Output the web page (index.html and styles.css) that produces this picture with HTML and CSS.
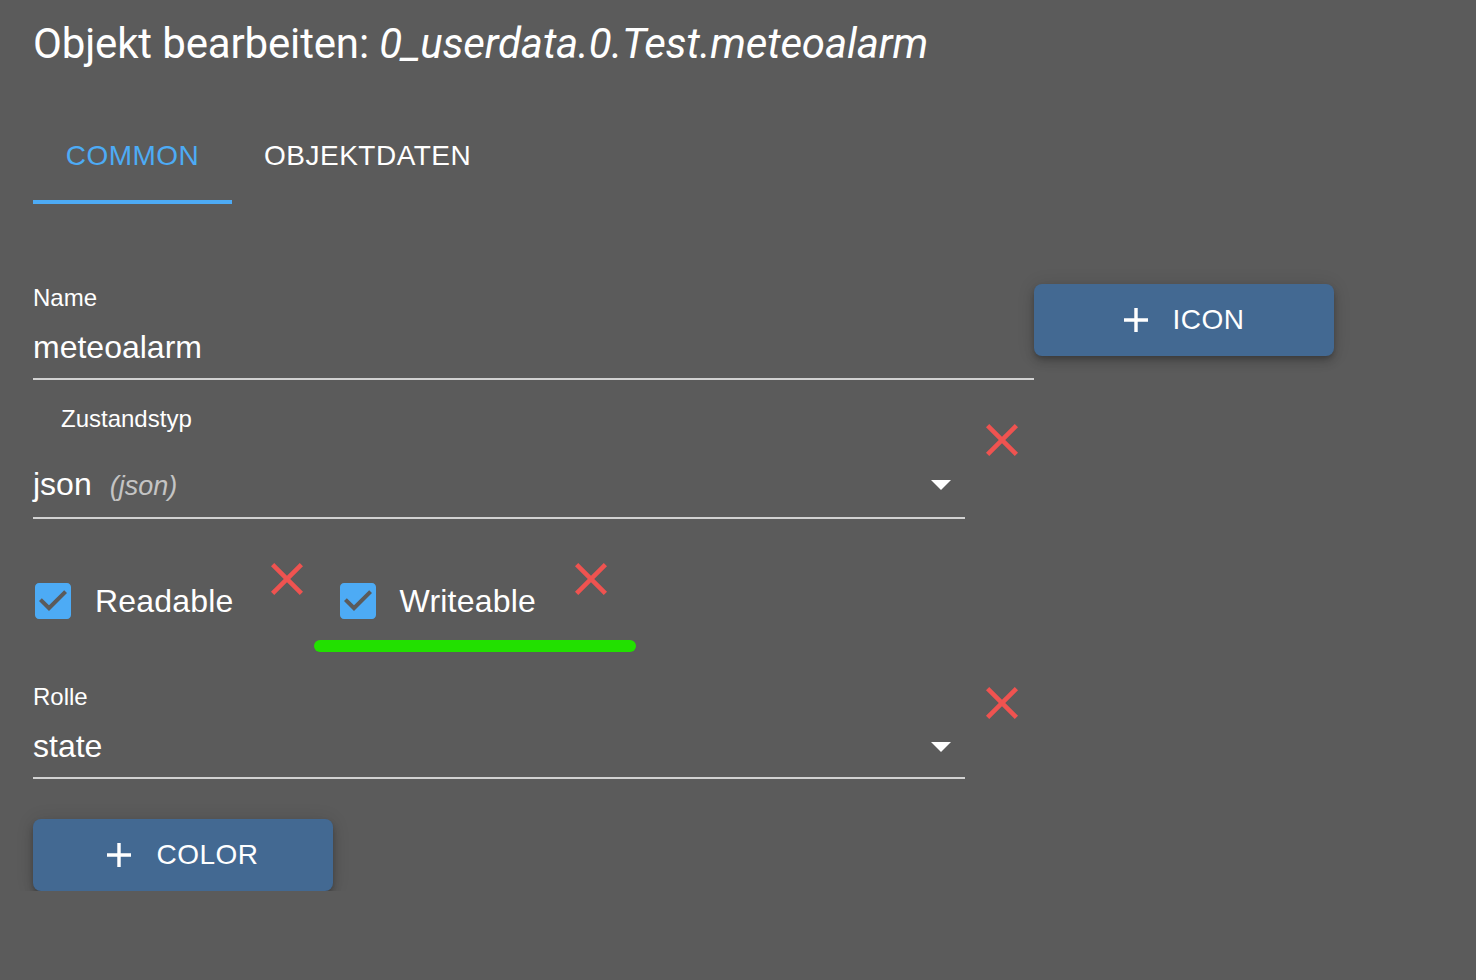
FILE: index.html
```html
<!DOCTYPE html>
<html lang="de">
<head>
<meta charset="utf-8">
<title>Objekt bearbeiten</title>
<link rel="stylesheet" href="styles.css">
</head>
<body>
<div class="page">
  <h1 class="title">Objekt bearbeiten: <i>0_userdata.0.Test.meteoalarm</i></h1>

  <div class="tabs">
    <div class="tab active">COMMON</div>
    <div class="tab">OBJEKTDATEN</div>
  </div>

  <div class="row row-name">
    <div class="field field-wide">
      <div class="label">Name</div>
      <div class="value value-name">meteoalarm</div>
    </div>
    <button class="btn">
      <svg class="plus" width="24" height="24" viewBox="5 5 14 14"><path d="M19 13h-6v6h-2v-6H5v-2h6V5h2v6h6v2z" fill="#fff"/></svg>
      <span>ICON</span>
    </button>
  </div>

  <div class="row row-type">
    <div class="field field-select">
      <div class="label label-indent">Zustandstyp</div>
      <div class="value value-type select">
        <span class="sel-text">json<span class="hint">(json)</span></span>
        <svg class="arrow" width="20" height="10" viewBox="7 10 10 5"><path d="M7 10l5 5 5-5z" fill="#fff"/></svg>
      </div>
    </div>
    <svg class="clear clear-type" width="32" height="32" viewBox="5 5 14 14"><path d="M19 6.41L17.59 5 12 10.59 6.41 5 5 6.41 10.59 12 5 17.59 6.41 19 12 13.41 17.59 19 19 17.59 13.41 12z" fill="#ef5350"/></svg>
  </div>

  <div class="row row-checks">
    <div class="check-group">
      <div class="check-line">
        <svg class="checkbox" width="36" height="36" viewBox="3 3 18 18"><path fill-rule="evenodd" d="M19 3H5c-1.11 0-2 .9-2 2v14c0 1.1.89 2 2 2h14c1.11 0 2-.9 2-2V5c0-1.1-.89-2-2-2zm-9 14l-5-5 1.41-1.41L10 14.17l7.59-7.59L19 8l-9 9z" fill="#4dabf5"/></svg>
        <span class="check-label">Readable</span>
        <svg class="clear" width="32" height="32" viewBox="5 5 14 14"><path d="M19 6.41L17.59 5 12 10.59 6.41 5 5 6.41 10.59 12 5 17.59 6.41 19 12 13.41 17.59 19 19 17.59 13.41 12z" fill="#ef5350"/></svg>
      </div>
    </div>
    <div class="check-group check-group-2">
      <div class="check-line">
        <svg class="checkbox" width="36" height="36" viewBox="3 3 18 18"><path fill-rule="evenodd" d="M19 3H5c-1.11 0-2 .9-2 2v14c0 1.1.89 2 2 2h14c1.11 0 2-.9 2-2V5c0-1.1-.89-2-2-2zm-9 14l-5-5 1.41-1.41L10 14.17l7.59-7.59L19 8l-9 9z" fill="#4dabf5"/></svg>
        <span class="check-label check-label-2">Writeable</span>
        <svg class="clear" width="32" height="32" viewBox="5 5 14 14"><path d="M19 6.41L17.59 5 12 10.59 6.41 5 5 6.41 10.59 12 5 17.59 6.41 19 12 13.41 17.59 19 19 17.59 13.41 12z" fill="#ef5350"/></svg>
      </div>
      <div class="green-bar"></div>
    </div>
  </div>

  <div class="row row-role">
    <div class="field field-select">
      <div class="label">Rolle</div>
      <div class="value value-role select">
        <span class="sel-text">state</span>
        <svg class="arrow" width="20" height="10" viewBox="7 10 10 5"><path d="M7 10l5 5 5-5z" fill="#fff"/></svg>
      </div>
    </div>
    <svg class="clear clear-role" width="32" height="32" viewBox="5 5 14 14"><path d="M19 6.41L17.59 5 12 10.59 6.41 5 5 6.41 10.59 12 5 17.59 6.41 19 12 13.41 17.59 19 19 17.59 13.41 12z" fill="#ef5350"/></svg>
  </div>

  <button class="btn btn-color">
    <svg class="plus" width="24" height="24" viewBox="5 5 14 14"><path d="M19 13h-6v6h-2v-6H5v-2h6V5h2v6h6v2z" fill="#fff"/></svg>
    <span>COLOR</span>
  </button>
</div>
</body>
</html>
```

FILE: styles.css
```css
html, body {
  margin: 0;
  background: #5b5b5b;
}
body {
  color: #fff;
  font-family: "Liberation Sans", Arial, sans-serif;
}
.page {
  padding: 20px 33px 0;
}
.title {
  margin: 0;
  font-family: Roboto, "Liberation Sans", sans-serif;
  font-weight: 400;
  font-size: 42px;
  line-height: 48px;
  letter-spacing: -0.15px;
  white-space: nowrap;
}
.title i {
  font-style: italic;
}
.tabs {
  display: flex;
  margin-top: 64px;
}
.tab {
  padding: 8px 32px 28px;
  font-size: 28px;
  line-height: 32px;
  letter-spacing: 0.5px;
  border-bottom: 4px solid transparent;
  color: #fff;
}
.tab.active {
  color: #4dabf5;
  border-bottom-color: #4dabf5;
  min-width: 199px;
  box-sizing: border-box;
  text-align: center;
}
.row {
  display: flex;
  align-items: flex-start;
}
.row-name {
  margin-top: 80px;
}
.row-type {
  margin-top: 25px;
}
.row-checks {
  margin-top: 44px;
}
.row-role {
  margin-top: 31px;
}
.field-wide {
  width: 1001px;
}
.field-select {
  width: 932px;
}
.label {
  font-size: 24px;
  line-height: 28px;
}
.label-indent {
  padding-left: 28px;
}
.value {
  font-size: 32px;
  line-height: 36px;
  height: 36px;
  border-bottom: 2px solid #d2d2d2;
}
.value-name {
  margin-top: 17px;
  padding-bottom: 13px;
}
.value-type {
  margin-top: 33px;
  padding-bottom: 15px;
}
.value-role {
  margin-top: 17px;
  padding-bottom: 13px;
}
.select {
  display: flex;
  justify-content: space-between;
  align-items: center;
}
.sel-text {
  line-height: 36px;
}
.hint {
  font-style: italic;
  font-size: 27px;
  line-height: 20px;
  color: #c4c4c4;
  margin-left: 18px;
}
.arrow {
  margin-right: 14px;
  position: relative;
  top: 1px;
}
.clear {
  display: block;
  flex: none;
}
.clear-type {
  margin-left: 21px;
  margin-top: 19px;
}
.clear-role {
  margin-left: 21px;
  margin-top: 4px;
}
.check-group {
  display: flex;
  flex-direction: column;
}
.check-line {
  display: flex;
  align-items: flex-start;
}
.checkbox {
  display: block;
  margin-top: 20px;
  margin-left: 2px;
  flex: none;
}
.check-label {
  margin-top: 20px;
  margin-left: 24px;
  margin-right: 37px;
  font-size: 32px;
  line-height: 36px;
  letter-spacing: 0.2px;
}
.check-label-2 {
  margin-right: 39px;
}
.check-group-2 {
  margin-left: 35px;
}
.green-bar {
  margin-top: 21px;
  margin-left: -24px;
  width: 322px;
  height: 12px;
  border-radius: 6px;
  background: #22e000;
}
.btn {
  display: flex;
  align-items: center;
  justify-content: center;
  gap: 25px;
  width: 300px;
  height: 72px;
  flex: none;
  padding: 0;
  border: none;
  border-radius: 8px;
  background: #436992;
  color: #fff;
  font-family: "Liberation Sans", Arial, sans-serif;
  font-size: 28px;
  letter-spacing: 0.5px;
  box-shadow: 0 3px 5px -1px rgba(0,0,0,0.2), 0 6px 10px 0 rgba(0,0,0,0.14), 0 1px 18px 0 rgba(0,0,0,0.12);
}
.plus {
  display: block;
}
.btn-color {
  margin-top: 40px;
}
```
